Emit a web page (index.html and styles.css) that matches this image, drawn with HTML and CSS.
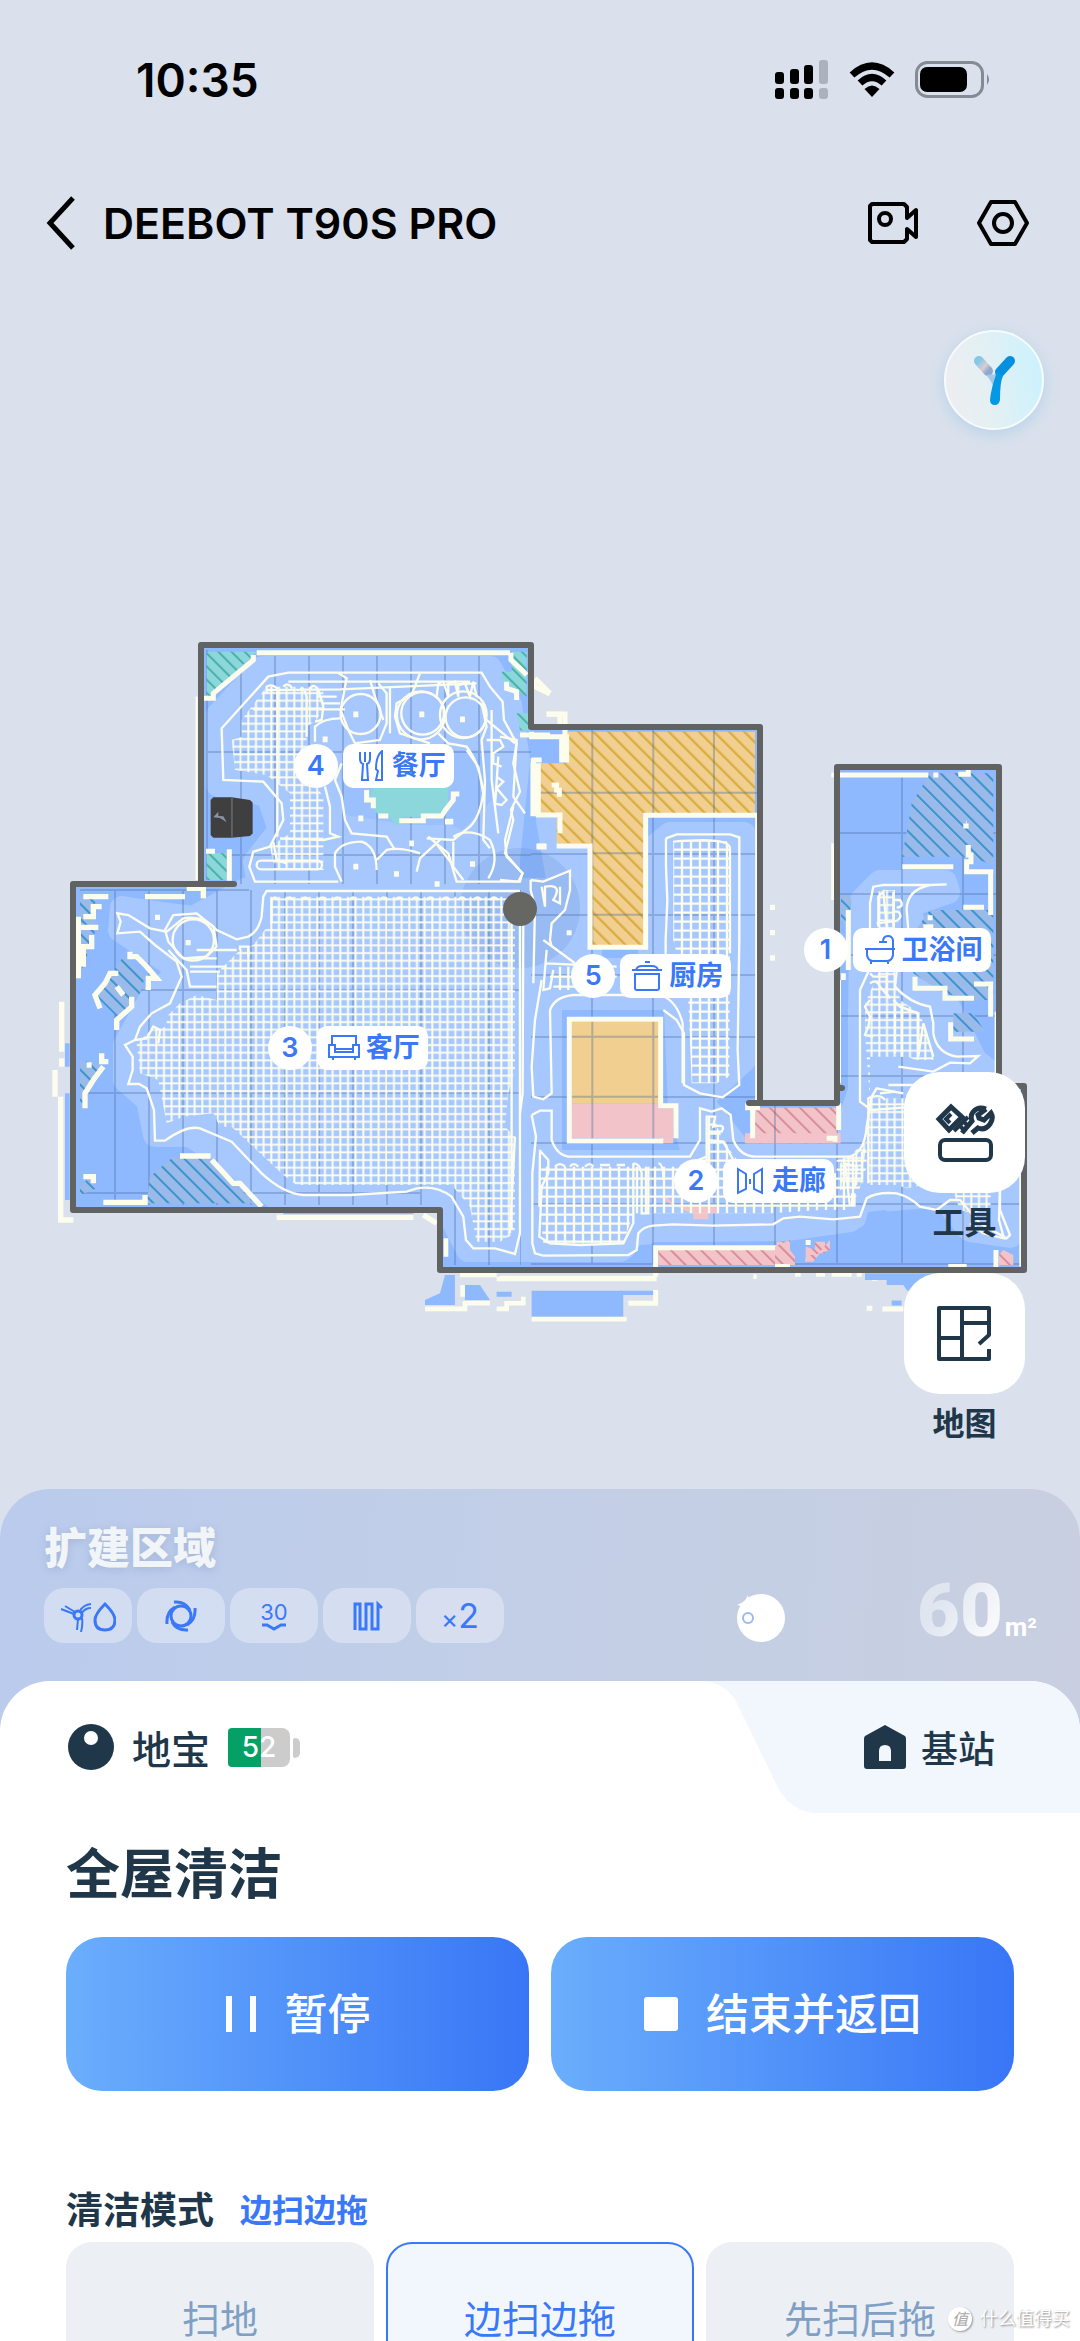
FILE: index.html
```
<!DOCTYPE html>
<html lang="zh-CN">
<head>
    <meta charset="UTF-8" />
    <meta name="viewport" content="width=device-width, initial-scale=1" />
    <title>DEEBOT T90S PRO</title>
    <link rel="stylesheet" href="styles.css">
</head>
<body>
    <div class="app">
        <div class="statusbar">
            <span class="time">10:35</span>
            <div class="status-icons">
                <svg width="54" height="40" viewBox="0 0 54 40">
                    <rect x="0" y="12" width="9" height="12" rx="3"/><rect x="15" y="9" width="9" height="15" rx="3"/><rect x="29" y="5" width="9" height="19" rx="3"/><rect x="44" y="0" width="9" height="24" rx="3" fill="#abb2bc"/>
                    <rect x="0" y="28" width="9" height="11" rx="3"/><rect x="15" y="28" width="9" height="11" rx="3"/><rect x="29" y="28" width="9" height="11" rx="3"/><rect x="44" y="28" width="9" height="11" rx="3" fill="#abb2bc"/>
                </svg>
                <svg width="46" height="36" viewBox="0 0 46 36">
                    <path d="M3 13Q23-5 43 13M11 21Q23 10 35 21" fill="none" stroke="#000" stroke-width="7"/>
                    <path d="M23 35L15.500 27Q23 20 30.500 27Z"/>
                </svg>
                <svg width="76" height="38" viewBox="0 0 76 38">
                    <rect x="1.500" y="1.500" width="66" height="34" rx="11" fill="none" stroke="#868b93" stroke-width="3"/>
                    <rect x="5" y="6" width="47" height="25" rx="7"/>
                    <path d="M72 13Q76 18.500 72 24Z" fill="#868b93"/>
                </svg>
            </div>
        </div>

        <header class="navbar">
            <a href="#" class="back" aria-label="返回">
                <svg width="30" height="54" viewBox="0 0 30 54"><path d="M27 2L4 27L27 52" fill="none" stroke="#000" stroke-width="5"/></svg>
            </a>
            <h1>DEEBOT T90S PRO</h1>
            <button type="button" class="nav-btn" aria-label="视频">
                <svg width="52" height="46" viewBox="0 0 52 46" fill="none" stroke="#000" stroke-width="4" stroke-linejoin="round">
                    <path d="M5 4H37L40 7V18L49 10V37L40 29V39L37 42H5L3 40V6Z"/><circle cx="18" cy="19" r="6"/>
                </svg>
            </button>
            <button type="button" class="nav-btn" aria-label="设置">
                <svg width="52" height="46" viewBox="0 0 52 46" fill="none" stroke="#000" stroke-width="4" stroke-linejoin="round">
                    <path d="M14 2H38L50 23L38 44H14L2 23Z"/><circle cx="26" cy="23" r="9"/>
                </svg>
            </button>
        </header>

        <main class="stage">
            <svg class="map" viewBox="0 286 1080 1203">
                <defs>
                    <pattern id="sweep" width="23" height="23" patternUnits="userSpaceOnUse"><path d="M4 0V23M0 12H23" stroke="#fdfdee" stroke-width="6"/></pattern>
                    <pattern id="sweep-wide" width="27" height="27" patternUnits="userSpaceOnUse"><path d="M6 0V27M0 8H27" stroke="#fdfdee" stroke-width="7"/></pattern>
                    <pattern id="teal" width="28" height="28" patternUnits="userSpaceOnUse" patternTransform="rotate(-45)"><rect width="28" height="28" fill="#8bd7db"/><rect width="6" height="28" fill="#4bb0a8"/></pattern>
                    <pattern id="blue" width="32" height="32" patternUnits="userSpaceOnUse" patternTransform="rotate(-45)"><rect width="32" height="32" fill="#9abbe9"/><rect width="6" height="32" fill="#3b93d0"/></pattern>
                    <pattern id="orange" width="32" height="32" patternUnits="userSpaceOnUse" patternTransform="rotate(-45)"><rect width="32" height="32" fill="#f1cf90"/><rect width="7" height="32" fill="#d9ad40"/></pattern>
                    <pattern id="pink" width="32" height="32" patternUnits="userSpaceOnUse" patternTransform="rotate(-45)"><rect width="32" height="32" fill="#f2c4c9"/><rect width="6" height="32" fill="#d98c99"/></pattern>
                    <clipPath id="home"><path d="M201 645H531V727H760V1103H837V767H999V1086H1024V1270H440V1210H73V884H201Z"/></clipPath>
                    <clipPath id="west"><path d="M201 645H531V884H521V1270H440V1210H73V884H201Z"/></clipPath>
                    <clipPath id="east"><path d="M531 727H760V1103H837V767H999V1086H1024V1270H531Z"/></clipPath>
                </defs>

                <!-- floor and cleaned area -->
                <g clip-path="url(#home)">
                    <rect x="60" y="630" width="980" height="660" fill="#8eb9fe"/>
                    <g fill="#a6c8fe" stroke="#a6c8fe" stroke-width="24" stroke-linejoin="round">
                        <path d="M218 715L262 668H490L510 705L518 760L508 860V890H560L548 820L590 870V970H650V850L670 834H744V1060L700 1100L740 1150H840L860 1090V1010L862 900L880 882H945L948 892L910 905L918 970L950 1010L975 1060L1000 1080L1010 1130V1236L970 1230L940 1195L880 1200L850 1220L780 1230H650L620 1250H468L445 1205H285L230 1160L190 1135H155L148 1100L125 1080V1045L150 1000L180 970L120 930L122 908L170 915L210 920L240 935L262 905L255 862L280 830L268 795L218 785Z"/>
                        <path d="M180 925L245 890L262 905L230 945Z"/>
                    </g>
                    <path d="M418 750H492V800L462 830L450 825H410L345 815L340 770Z" fill="#8eb9fe" opacity=".5"/>
                    <path d="M562 1010H664L668 1110L680 1150H562Z" fill="#8eb9fe"/>
                    <path d="M860 1240L868 1212L885 1210L918 1226L940 1212L965 1245L1000 1255V1275H620L640 1245L690 1242Z" fill="#8eb9fe"/>
                </g>
                <g clip-path="url(#west)">
                    <path d="M115 890V1205M149 890V1205M183 890V1205M217 890V1205M251 890V1205M285 890V1205M319 890V1205M353 890V1205M387 890V1205M421 890V1205M455 890V1265M489 890V1265M521 890V1265M207 650V880M241 656V884M275 656V884M309 656V884M343 656V884M377 656V884M411 656V884M445 656V884M479 656V884M80 890H249M80 1093H521M80 1193H420M126 990H521M207 752H531M207 855H531" fill="none" stroke="#42659c" stroke-width="2" opacity=".3"/>
                </g>
                <g clip-path="url(#east)">
                    <path d="M592 727V1265M653 727V1265M714 727V1265M775 1103V1265M837 1103V1265M902 775V1265M963 775V1265M531 793H760M531 854H760M531 915H760M531 975H760M531 1037H760M531 1097H760M531 1143H1024M531 1204H1024M531 1264H1024M837 833H999M837 894H999M837 955H999M837 1016H999M837 1076H999" fill="none" stroke="#42659c" stroke-width="2" opacity=".3"/>
                </g>
                <circle cx="520" cy="908" r="60" fill="#5b7fc0" opacity=".18"/>

                <!-- 餐厅 -->
                <g transform="translate(40 620) scale(.3333)" fill="none" stroke="#fdfdee" stroke-width="7">
                    <path d="M500 95H650L500 240Z" fill="url(#teal)" stroke="none"/>
                    <path d="M1415 95H1460V230L1385 180V155H1415ZM500 700H560V780H500ZM1430 280H1470V335L1440 330Z" fill="url(#teal)" stroke="none"/>
                    <path d="M1000 500H1225V550L1195 590H1085V615H1065L1045 585H1015L985 545Z" fill="#8bd7db" stroke="none"/>
                    <path d="M680 200H850V260L830 300L800 320V460L830 500L850 530V750H700V730L690 680L750 640V520L680 465L585 450L575 360L605 350V300L650 240Z" fill="url(#sweep)" stroke="none"/>
                    <path d="M895 785H645L628 740L640 695L690 680L730 600L725 550L670 485L550 480L545 325L685 170L745 158H1325L1350 200L1388 245L1392 300L1430 370L1420 430L1440 515L1413 570L1420 600L1395 700L1447 760L1440 785H1250L1225 700L1165 650"/>
                    <path d="M680 220V200Q695 190 712 205V650M730 200Q745 185 757 205M780 210Q790 195 800 230V350M808 210Q820 185 835 210L850 260L845 300L825 305M640 268H915M680 210L900 208L1310 190M745 185H1290M830 230H890M850 250H900"/>
                    <path d="M895 158L920 175L902 270L925 330L945 370L1020 360L1040 310V220L1015 190M990 180L1005 230L1030 300M1050 200V340M1140 160L1115 225L1070 250L1065 290L1080 340L1170 370M1190 230L1195 190L1210 185L1225 230V190L1245 185L1255 230V195L1275 190L1290 230L1300 185L1310 230"/>
                    <circle cx="962" cy="282" r="60"/><circle cx="1148" cy="280" r="64"/><circle cx="1143" cy="286" r="72"/><circle cx="1277" cy="292" r="60"/><circle cx="1270" cy="284" r="70"/>
                    <path d="M825 365V320Q850 295 900 295M905 430L885 480L905 530L915 600L935 640L1040 650L1065 690M1195 340L1225 370L1280 380Q1320 430 1330 520Q1320 590 1290 620L1240 660L1160 655M1280 390L1315 440L1330 520M1325 250L1340 320L1325 360L1335 480L1330 660L1350 685M1355 270V480L1375 640L1365 560L1375 410M1340 360H1380L1390 380L1360 400V430L1385 440M1370 470L1390 485L1370 505L1400 540L1385 555L1360 550M1340 300L1425 370"/>
                    <path d="M855 500L870 560V640L895 650L850 660L720 655M700 665L710 720L740 730M905 785L885 740V700Q905 665 965 665Q1010 680 1010 750M1010 720L1040 690Q1080 680 1140 700M1130 755L1140 715L1200 660M1240 665L1240 740L1270 780M1240 650Q1290 620 1350 660Q1380 720 1345 775M1180 660L1235 730"/>
                    <rect x="650" y="722" width="196" height="26" rx="13"/>
                    <path d="M650 98H1410M490 235H520V220L640 120V105M1413 98V120L1440 145L1460 165M1400 185V205L1430 215V240M1485 180V200L1530 222M1520 283H1560V330" stroke-width="15"/>
                    <path d="M498 694H525M568 688V782M980 510V540H1000V565M1015 588H1045M1078 602H1150V588H1205L1215 572L1240 540V522H1258M1440 345H1530M1480 415V430" stroke-width="15"/>
                    <path d="M940 283H955M1138 283H1153M1260 298H1275M848 358H863M940 740H955M955 595H970M1062 762H1077M1108 670H1122M1290 732H1305M1184 792H1199M1215 605H1240M1480 428V580H1530M1490 680H1520" stroke-width="17"/>
                    <path d="M470 230V780" stroke-width="7"/>
                    <path d="M512 540L520 532H575L630 540L638 548V640L630 648L575 653H520L512 645Z" fill="#3f3f40" stroke="none"/>
                    <path d="M576 534V651" stroke="#7c8288" stroke-width="3"/>
                    <path d="M535 575L520 592L540 594L560 607L550 589L535 588Z" fill="#8b93a3" stroke="none"/>
                </g>

                <!-- 客厅 -->
                <g transform="translate(40 880) scale(.3333)" fill="none" stroke="#fdfdee" stroke-width="7">
                    <path d="M120 50H180L150 90L170 140L120 290ZM250 230L315 290L300 340L240 420L170 350L200 300ZM120 540L200 560L150 620L120 690ZM120 920L150 890L170 925L120 945ZM320 970L330 890L400 830H510L640 970Z" fill="url(#blue)" stroke="none"/>
                    <path d="M690 50H1400L1425 130V570L1405 640L1395 740L1425 770V1060L1380 1085H1310L1290 980L1235 915H1190L980 915H770L730 885L660 820L575 740H540L520 700L430 710L380 730L355 600L300 580L290 490L335 450L380 440V410L420 370L470 345L530 360V280L600 210L640 195L690 130Z" fill="url(#sweep)" stroke="none"/>
                    <path d="M1440 130V1060L1425 1122L1365 1105H1300L1278 1080L1270 1010L1235 950Q1190 915 1130 925L1100 935L930 945L790 945Q730 940 665 880L575 785L480 745Q440 735 375 782H345L342 690L320 625L297 612H265L278 570V530L255 495L285 480L300 440L335 400L390 370L425 290L410 245L345 195L300 155L232 160L242 125L232 100L265 105L330 145L380 155L430 115Q490 105 530 150L590 178L625 170Q655 155 665 110L670 50L680 33H1440"/>
                    <circle cx="460" cy="180" r="62"/><path d="M385 185L375 150L400 105L470 100L520 140L530 200L500 230L430 235ZM385 210L440 270L450 320H530M590 210H470M530 235H440M450 260H560M450 275H540M285 480L320 475L340 440L360 450L355 490M600 210V200H625V230M695 130V60Q705 45 715 60M735 60Q750 45 762 60M785 60Q795 45 808 60M835 60Q847 45 858 60M880 60Q892 45 903 60M928 60Q940 45 950 60M975 60Q985 45 998 60M1020 60Q1030 45 1043 60M1065 60Q1078 45 1090 60M1115 60Q1127 45 1138 60M1160 60Q1170 45 1183 60M1205 60Q1218 45 1230 60M1255 60Q1265 45 1278 60M1300 60Q1312 45 1325 60M1350 60Q1362 45 1375 60M1450 130L1448 640L1440 700M1415 130V1050M1425 770L1410 1060"/>
                    <path d="M130 50H205M315 50H435M440 25H490V55M130 110H160V80H185M105 142H175M115 110V295M155 165V200H130V260M270 215V230H290L320 260L350 295H325V330M235 280H210L195 310L165 345L180 385M230 320L250 345M275 350V380L230 420V450M185 520V545H205M190 560L160 600L135 640V685M155 555H140M345 112H360M437 188H452M130 890H160V910M190 967H315V945M420 828H512M515 840L580 910H600L665 980M65 365V515M65 535V560M45 570V650M62 650V1020H100M710 1012H1120M1150 1005L1190 1030" stroke-width="16"/>
                    <path d="M82 490V560M82 640V960" stroke="#8eb9fe" stroke-width="14"/>
                    <path d="M1215 1185H1245V1275H1155V1260L1200 1240ZM1275 1215H1320L1350 1260H1275ZM1370 1235H1415V1250H1370ZM1475 1232H1850V1245H1750V1310H1475ZM730 995H1120V1003H730Z" fill="#8eb9fe" stroke="none"/>
                    <path d="M1155 1287H1275V1270H1350M1268 1215V1250M1370 1287H1400V1270H1450V1250M1260 1185H1370M1370 1197H1850M1475 1318H1760M1218 1075V1130" stroke-width="14"/>
                </g>

                <!-- 厨房 -->
                <g transform="translate(500 640) scale(.3333)" fill="none" stroke="#fdfdee" stroke-width="7">
                    <path d="M200 275H765V520H435V920H270V610H170V530H120V370H200Z" fill="url(#orange)" stroke="none"/>
                    <path d="M277 275V920M460 275V520M642 275V520M120 458H765M277 640H430M277 824H430" stroke="#42659c" stroke-width="6" opacity=".35"/>
                    <path d="M95 275V290H200V360H185V290M95 360H125M115 370V525H180V580M170 618H270V922H437V526H775M155 435H170V450H178V470M110 618H138M105 115L150 160M140 222H195V290M200 878H215" stroke-width="15"/>
                    <path d="M810 802H825M810 878H825M810 954H825" stroke-width="16"/>
                    <path d="M520 603H680L690 625V940L688 1310L650 1330H575L565 1080L520 900Z" fill="url(#sweep-wide)" stroke="none"/>
                    <path d="M498 595L530 583H690L718 592V900L713 1230L718 1335L668 1372L600 1360L552 1335V1180L530 1140L490 1110M498 595V680L502 780L497 900V960M520 605Q690 590 690 625V940M75 520L40 470L50 300L0 290M40 500L15 600L20 650L68 700L55 725L0 720M92 720V750L105 800L100 1030M92 720L130 725L210 692V750L195 810L155 850L150 900L155 920M130 900L225 970M125 740L135 800V740Q190 730 160 780L180 790V740M140 930L130 1050L150 1045L160 990M140 970L350 980M150 1010H350M160 1040H230M180 980V1050M205 980V1050"/>
                    <path d="M770 530V1385" stroke-width="9"/>
                </g>

                <!-- 走廊 -->
                <g transform="translate(500 960) scale(.3333)" fill="none" stroke="#fdfdee" stroke-width="7">
                    <path d="M215 185H480V430H215Z" fill="#f1cf90" stroke="none"/>
                    <path d="M215 430H475V445H520V550H480V535H215ZM490 720L500 710L530 740H550L580 735H655V760H625V778H580V760L550 750Z" fill="#f2c4c9" stroke="none"/>
                    <path d="M765 443H1010V550H735V535H765ZM475 870H830V845H870V880L885 915H475ZM920 870H945V845H975V880H960L940 905H915Z" fill="url(#pink)" stroke="none"/>
                    <path d="M735 520H1022V550H735Z" fill="#f2c4c9" stroke="none"/>
                    <path d="M277 185V535M460 185V535M215 230H475M215 410H475M825 443V550" stroke="#42659c" stroke-width="6" opacity=".35"/>
                    <path d="M490 543H208V178H482V437H528V535M743 430V443H780M758 450V535M1016 430V510M980 535H1005V545M467 950V863H830M830 870H865M0 955H467M467 990V1030H385" stroke-width="15"/>
                    <path d="M120 620H520L620 590V470H650V500L690 570L740 640H1010V600L1080 580L1100 560V620L1075 700L1040 750H960L810 760H400L370 850H130L120 740Z" fill="url(#sweep-wide)" stroke="none"/>
                    <path d="M150 150Q165 110 220 105H480Q530 120 548 190V370M125 60L105 180L95 320L100 410L130 418L155 400L150 150M95 465L120 452H155V540Q170 585 205 590H570L600 540V445L635 455L665 445L692 465L700 540Q720 590 770 590H1050Q1095 575 1100 500L1115 410L1130 385L1210 400M95 465L108 530L97 640V850L105 880L130 887L385 885L410 870L415 820Q430 800 460 797L520 793L640 797L820 793L850 775L900 770L1000 778L1080 770L1100 715Q1130 695 1190 700Q1230 710 1260 740L1310 750L1350 720H1380L1440 790L1520 835L1530 825L1500 750V690"/>
                    <path d="M118 570L145 600V640L125 680L118 830L150 850L240 855L370 850L400 790V610M120 570L118 740M165 620Q180 605 195 620M210 620Q220 605 235 620M255 620Q270 605 280 620M300 615H330M350 615H375M400 610Q420 610 425 640V760H445V620M475 610Q490 610 490 660M620 600V470H645L640 500Q680 490 665 515L630 515M595 600L620 590M620 540L670 545L700 600"/>
                    <path d="M1060 700V740M770 950H760" stroke-width="14"/>
                </g>

                <!-- 卫浴间 -->
                <g transform="translate(740 740) scale(.3333)" fill="none" stroke="#fdfdee" stroke-width="7">
                    <path d="M570 100H760V375L690 350H485L500 280L515 190ZM303 465H330L335 490L320 560L303 540ZM570 510H760V780H700L610 760L520 700V580ZM640 820H700L735 875H640Z" fill="url(#blue)" stroke="none"/>
                    <path d="M298 105H565M580 105H595M655 103H685V90M487 380H640M678 250H680M685 315V345H693V365H680V395H760M752 390V525M670 502H732M563 533H578M550 560H580M325 510V690M310 700V720M525 710V745H615V775H702M702 732H752V830M632 847V897H702M670 258H686" stroke-width="15"/>
                    <path d="M278 310V480M278 98V112" stroke-width="9"/>
                    <path d="M415 455L435 450H465V700L480 780L540 820L580 940V960H525L505 950H390V1085L375 880V790L415 700Z" fill="url(#sweep)" stroke="none"/>
                    <path d="M620 433L570 435Q500 450 500 510L505 570M570 435H430L400 440L390 490V570M415 560V470L430 455L440 560M460 455V560M465 480H480Q495 500 470 503M460 515H475Q490 530 470 543L410 550M385 695L360 750V1085L395 1110L525 1100M390 700L400 710H440V760L450 775M470 695L465 740Q510 790 570 800L580 850V880Q590 940 650 950L715 948L690 970L630 968L580 995L475 980M460 780L480 800L535 820V950L550 850L580 950M390 730Q410 715 420 740L450 775M390 780L375 800L390 830L385 860L375 885L400 890M465 780V940M485 800V950"/>
                    <path d="M385 1075H580V1330L500 1345L470 1335H385L385 1200L370 1270V1330L300 1350V1270L385 1200ZM640 1355H752V1400L700 1420L660 1410Z" fill="url(#sweep)" stroke="none"/>
                    <path d="M445 1035H560M420 1060L465 1055M385 1330V1075Q420 1060 435 1080M330 1400L315 1270L350 1280L345 1340M780 1355L777 1440L792 1495L730 1480L690 1450"/>
                    <path d="M768 815V1035M842 1300V1580M299 720V1030" stroke-width="8"/>
                    <path d="M777 1545L790 1530L820 1545V1575H777ZM105 1520L150 1500V1530L165 1550V1575H105ZM197 1520L240 1535L270 1500V1530L240 1540L220 1545H197Z" fill="url(#pink)" stroke="none"/>
                    <path d="M768 1530V1585M197 1508H212M165 1603H182M228 1603H255M275 1603H335M350 1603H365M395 1615H412M380 1705H397M427 1707H490M105 1580H150M625 1580H680" stroke-width="15"/>
                    <path d="M375 1600H590V1700L500 1650L490 1635H440V1620H375ZM455 1682H485V1697H455Z" fill="#8eb9fe" stroke="none"/>
                </g>

                <path d="M234 884H73V1210H440V1270H1024V1086H999V767H837V1103H749M760 1103V727H531V645H201V884M837 1088H842" fill="none" stroke="#616262" stroke-width="6" stroke-linejoin="round" stroke-linecap="round"/>
                <circle cx="520" cy="909" r="17" fill="#666762"/>
            </svg>

            <div class="room dining">
                <span class="order">4</span>
                <span class="name">
                    <svg width="32" height="32" viewBox="0 0 32 32"><path d="M6 2V9Q6 13 9 14L8 30H14L13 14Q16 13 16 9V2M11 2V12M28 1Q22 6 22 19L24 21L22 30H28Z"/></svg>
                    餐厅
                </span>
            </div>
            <div class="room living">
                <span class="order">3</span>
                <span class="name">
                    <svg width="32" height="32" viewBox="0 0 32 32"><path d="M4 13V4H28V13M1 13H7V20H25V13H31V25H1ZM7 17H25M5 25V28M27 25V28"/></svg>
                    客厅
                </span>
            </div>
            <div class="room kitchen">
                <span class="order">5</span>
                <span class="name">
                    <svg width="32" height="32" viewBox="0 0 32 32"><path d="M4 14H28V28Q28 30 26 30H6Q4 30 4 28ZM1 10H31M5 10Q6 6 11 6H21Q26 6 27 10M14 2H19"/></svg>
                    厨房
                </span>
            </div>
            <div class="room hall">
                <span class="order">2</span>
                <span class="name">
                    <svg width="32" height="32" viewBox="0 0 32 32"><path d="M4 4L12 9V24L4 28ZM28 4L20 9V24L28 28ZM16 14V19"/></svg>
                    走廊
                </span>
            </div>
            <div class="room bath">
                <span class="order">1</span>
                <span class="name">
                    <svg width="32" height="32" viewBox="0 0 32 32"><path d="M1 15H31M3 15V21Q4 27 9 27H23Q28 27 29 21V6Q28 2 24 2Q19 2 19 8M15 8H23M7 27V30M24 27V30"/></svg>
                    卫浴间
                </span>
            </div>

            <button type="button" class="assistant" aria-label="语音助手">
                <svg width="44" height="56" viewBox="0 0 44 56" fill="none" stroke-linecap="round" stroke-width="10">
                    <defs>
                        <linearGradient id="arm" x1="0" y1="0" x2="1" y2="1"><stop offset="0" stop-color="#86c7e5"/><stop offset=".6" stop-color="#dbcdd2"/><stop offset="1" stop-color="#8ca9d0"/></linearGradient>
                    </defs>
                    <path d="M7 9L16 19" stroke="url(#arm)"/>
                    <path d="M14 23L26 22L23 38Q19 28 14 23Z" fill="#a7c7ea"/>
                    <path d="M38 9L28 20" stroke="#078fdf"/>
                    <path d="M31 24Q28 30 28 48Q27 53 23 53Q18 53 18 48Q19 36 25 20Z" fill="#0699e3"/>
                </svg>
            </button>

            <div class="tools">
                <button type="button" class="tool">
                    <span class="tool-icon">
                        <svg width="62" height="60" viewBox="0 0 62 60" fill="none" stroke="#20374a" stroke-width="4">
                            <rect x="6" y="37" width="51" height="20" rx="5"/>
                            <path d="M17 4L5 16L15 27L28 14Z" stroke-width="5"/>
                            <path d="M17 11L12 16L16 20M20 28L34 14M25 22L30 27M29 18L34 23" stroke-width="4"/>
                            <path d="M52 6Q44 3 39 9Q36 13 38 18L28 30M38 30L44 25Q51 28 56 21Q60 15 57 10L50 17L45 15L44 12L52 6" stroke-width="5"/>
                        </svg>
                    </span>
                    工具
                </button>
                <button type="button" class="tool">
                    <span class="tool-icon">
                        <svg width="55" height="55" viewBox="0 0 55 55" fill="none" stroke="#20374a" stroke-width="4" stroke-linejoin="round">
                            <path d="M52 43V53H2V2H52V29L42 38M25 2V53M2 32H25M25 17H52"/>
                        </svg>
                    </span>
                    地图
                </button>
            </div>
        </main>

        <section class="task">
            <div class="task-head">
                <div>
                    <h2>扩建区域</h2>
                    <ul class="chips">
                        <li>
                            <svg width="56" height="32" viewBox="0 0 56 32">
                                <circle cx="18" cy="15" r="4"/><path d="M1 9L14 14M5 6L15 12M20 11Q23 5 31 4M22 13Q25 8 31 8M18 19L17 30M22 18Q23 24 21 32" stroke-width="2"/>
                                <path d="M45 4Q55 14 55 20Q55 30 45 30Q35 30 35 20Q35 14 45 4Z"/>
                            </svg>
                        </li>
                        <li>
                            <svg width="32" height="32" viewBox="0 0 32 32">
                                <circle cx="16" cy="16" r="10"/><path d="M9 2Q20 1 25 10M30 8Q31 20 22 25M23 30Q12 31 7 22M2 24Q1 12 10 7"/>
                            </svg>
                        </li>
                        <li class="water">
                            <span>30</span>
                            <svg width="26" height="8" viewBox="0 0 26 8"><path d="M1 2H6L13 6L20 2H25"/></svg>
                        </li>
                        <li>
                            <svg width="32" height="32" viewBox="0 0 32 32"><path d="M4 30V4H9V29H15V4H21V29H27V4L31 8"/></svg>
                        </li>
                        <li class="times"><small>×</small>2</li>
                    </ul>
                </div>
                <svg class="bot" width="50" height="52" viewBox="0 0 50 52">
                    <circle cx="26" cy="27" r="24" fill="#fff"/><path d="M2 14L10 10L13 4L14 12L6 15Z" fill="#fff"/>
                    <circle cx="13" cy="27" r="5" fill="none" stroke="#9db9ee" stroke-width="2"/>
                </svg>
                <p class="area"><b>60</b><span>m²</span></p>
            </div>

            <div class="sheet">
                <nav class="tabs">
                    <button type="button" class="tab">
                        <svg width="46" height="46" viewBox="0 0 46 46"><circle cx="23" cy="23" r="23" fill="#20374a"/><circle cx="23" cy="14" r="7" fill="#fff"/></svg>
                        地宝
                        <span class="battery">52</span>
                    </button>
                    <button type="button" class="tab station">
                        <svg class="tab-bg" viewBox="0 0 380 132" preserveAspectRatio="none"><path d="M0 0H380V132H113Q90 130 77 108L34 20Q24 2 0 0Z" fill="#f2f7fe"/></svg>
                        <svg class="tab-icon" width="42" height="44" viewBox="0 0 42 44"><path d="M21 0L41 11Q42 12 42 14V41Q42 44 39 44H3Q0 44 0 41V14Q0 12 1 11ZM15 36H27V26Q27 20 21 20Q15 20 15 26Z" fill="#20374a" fill-rule="evenodd"/></svg>
                        <span>基站</span>
                    </button>
                </nav>

                <div class="sheet-body">
                    <h2>全屋清洁</h2>
                    <div class="actions">
                        <button type="button">
                            <svg width="32" height="36" viewBox="0 0 32 36"><path d="M1 0H7V36H1ZM25 0H31V36H25Z" fill="#fff"/></svg>
                            暂停
                        </button>
                        <button type="button">
                            <svg width="34" height="36" viewBox="0 0 34 36"><rect y="1" width="34" height="34" rx="3" fill="#fff"/></svg>
                            结束并返回
                        </button>
                    </div>

                    <div class="mode-head">
                        <h3>清洁模式</h3>
                        <span>边扫边拖</span>
                    </div>
                    <div class="modes">
                        <input type="radio" name="mode" id="sweep-only"><label for="sweep-only">扫地</label>
                        <input type="radio" name="mode" id="both" checked><label for="both">边扫边拖</label>
                        <input type="radio" name="mode" id="mop-after"><label for="mop-after">先扫后拖</label>
                    </div>
                </div>
            </div>
        </section>

        <div class="watermark"><i>值</i>什么值得买</div>
    </div>
</body>
</html>
```
FILE: styles.css
```
* {
    box-sizing: border-box;
}

body {
    margin: 0;
    background: #dae1ec;
    color: #20374a;
    font-family: Inter, "Noto Sans CJK SC", sans-serif;
}

h1, h2, h3, p, ul {
    margin: 0;
    padding: 0;
}

button {
    border: 0;
    padding: 0;
    background: none;
    color: inherit;
    font-family: inherit;
    cursor: pointer;
}

svg {
    display: block;
    flex-shrink: 0;
}

.app {
    position: relative;
    height: 100vh;
    overflow: hidden;
}

/* Status bar */
.statusbar {
    display: flex;
    align-items: center;
    justify-content: space-between;
    height: 160px;
    padding: 0 89px 0 136px;
    color: #000;
}

.time {
    font-size: 46px;
    font-weight: 600;
}

.status-icons {
    display: flex;
    align-items: center;
    gap: 20px;
}

/* Header */
.navbar {
    display: flex;
    align-items: center;
    height: 126px;
    padding: 0 51px 0 46px;
    color: #000;
}

.navbar h1 {
    flex: 1;
    margin-left: 27px;
    font-size: 43px;
    font-weight: 600;
}

.nav-btn {
    margin-left: 58px;
}

/* Map */
.stage {
    position: relative;
}

.map {
    width: 100%;
}

.room {
    position: absolute;
    display: flex;
    align-items: center;
    gap: 5px;
    color: #3a78f7;
    font-size: 27px;
    font-weight: 600;
    line-height: 44px;
}

.order {
    width: 44px;
    height: 44px;
    border-radius: 50%;
    background: #fff;
    text-align: center;
}

.name {
    display: flex;
    align-items: center;
    gap: 6px;
    height: 44px;
    padding: 0 8px 0 11px;
    border-radius: 10px;
    background: #fff;
    white-space: nowrap;
}

.name svg, .chips svg {
    fill: none;
    stroke: #3a78f7;
    stroke-width: 2;
}

.dining { left: 27.2%; top: 38.1%; }
.living { left: 24.8%; top: 61.5%; }
.kitchen { left: 52.9%; top: 55.5%; }
.hall { left: 62.4%; top: 72.6%; }
.bath { left: 74.4%; top: 53.4%; }

.assistant {
    position: absolute;
    top: 44px;
    right: 36px;
    display: flex;
    align-items: center;
    justify-content: center;
    width: 100px;
    height: 100px;
    border: 2px solid #f4fafd;
    border-radius: 50%;
    background: linear-gradient(80deg, #efedf0, #e3f0f3 45%, #c9f2ff);
    box-shadow: 0 4px 16px #b6d2e8;
}

.tools {
    position: absolute;
    top: 786px;
    right: 55px;
    display: grid;
    gap: 20px;
}

.tool {
    font-size: 32px;
    font-weight: 600;
    line-height: 60px;
}

.tool-icon {
    display: flex;
    align-items: center;
    justify-content: center;
    width: 121px;
    height: 121px;
    border-radius: 36px;
    background: #fff;
}

/* Current task */
.task {
    border-radius: 50px 50px 0 0;
    background: linear-gradient(95deg, #bacbed, #c3cfe6 50%, #c9cfdf);
}

.task-head {
    display: flex;
    align-items: flex-end;
    height: 192px;
    padding: 0 43px 38px 44px;
}

.task-head h2 {
    color: #f1f5f7;
    font-size: 43px;
    font-weight: 900;
    line-height: 50px;
    text-shadow: 0 2px 8px #a3b5da;
}

.chips {
    display: flex;
    gap: 5px;
    margin-top: 15px;
    list-style: none;
}

.chips li {
    display: flex;
    align-items: center;
    justify-content: center;
    width: 88px;
    height: 55px;
    border-radius: 20px;
    background: rgba(255, 255, 255, 0.34);
    color: #3a78f7;
}

.chips svg {
    stroke-width: 3;
}

.chips .water {
    flex-direction: column;
    font-size: 22px;
    line-height: 22px;
}

.chips .times {
    align-items: baseline;
    font-size: 34px;
    line-height: 55px;
}

.times small {
    font-size: 26px;
}

.bot {
    margin: 0 132px 0 auto;
}

.area {
    display: flex;
    align-items: baseline;
    justify-content: space-between;
    width: 120px;
    height: 70px;
    line-height: 76px;
    color: #fff;
    font-family: Roboto, sans-serif;
    font-weight: 700;
}

.area b {
    background: linear-gradient(120deg, #dfe6f0 30%, #f7f8fb 80%);
    background-clip: text;
    -webkit-background-clip: text;
    color: transparent;
    font-size: 74px;
}

.area span {
    font-size: 26px;
}

/* Bottom sheet */
.sheet {
    overflow: hidden;
    border-radius: 50px 50px 0 0;
    background: #fff;
}

.tabs {
    display: flex;
    justify-content: space-between;
    height: 132px;
}

.tab {
    display: flex;
    align-items: center;
    gap: 18px;
    padding-left: 68px;
    font-size: 39px;
    font-weight: 500;
}

.battery {
    position: relative;
    width: 62px;
    height: 39px;
    border-radius: 4px 8px 8px 4px;
    background: linear-gradient(90deg, #04a066 53%, #ccc 53%);
    color: #fff;
    font-size: 28px;
    line-height: 39px;
}

.battery::after {
    content: "";
    position: absolute;
    top: 10px;
    right: -10px;
    width: 7px;
    height: 20px;
    border-radius: 2px 5px 5px 2px;
    background: #ccc;
}

.station {
    position: relative;
    justify-content: flex-end;
    gap: 15px;
    width: 35%;
    padding-right: 85px;
    font-size: 37px;
}

.station .tab-bg {
    position: absolute;
    top: 0;
    left: 0;
    width: 100%;
    height: 100%;
}

.station .tab-icon, .station span {
    position: relative;
}

.sheet-body {
    padding: 22px 66px 60px;
}

.sheet-body h2 {
    font-size: 54px;
    font-weight: 600;
    line-height: 80px;
}

.actions {
    display: flex;
    gap: 22px;
    margin-top: 22px;
}

.actions button {
    flex: 1;
    display: flex;
    align-items: center;
    justify-content: center;
    gap: 28px;
    height: 154px;
    border-radius: 36px;
    background: linear-gradient(90deg, #6aaefc, #3876f6);
    color: #fff;
    font-size: 43px;
    font-weight: 500;
    line-height: 60px;
}

.mode-head {
    display: flex;
    align-items: center;
    gap: 26px;
    margin-top: 95px;
    line-height: 50px;
}

.mode-head h3 {
    font-size: 37px;
    font-weight: 600;
}

.mode-head span {
    color: #3a78f7;
    font-size: 32px;
    font-weight: 600;
}

.modes {
    display: flex;
    gap: 12px;
    margin-top: 6px;
}

.modes input {
    position: absolute;
    opacity: 0;
}

.modes label {
    flex: 1;
    height: 158px;
    border: 2px solid #ecf0f5;
    border-radius: 26px;
    background: #ecf0f5;
    color: #7fa0c4;
    font-size: 38px;
    line-height: 150px;
    text-align: center;
}

.modes input:checked + label {
    border-color: #3a78f7;
    background: #f2f7fe;
    color: #3a78f7;
}

.watermark {
    position: absolute;
    right: 10px;
    bottom: 8px;
    display: flex;
    align-items: center;
    gap: 8px;
    color: #fff;
    font-size: 18px;
    line-height: 28px;
    text-shadow: 1px 1px 2px #888;
}

.watermark i {
    width: 24px;
    height: 24px;
    border-radius: 50%;
    background: #fff;
    box-shadow: 1px 1px 2px #999;
    color: #aaa;
    font-size: 16px;
    line-height: 24px;
    text-align: center;
    text-shadow: none;
}
```
